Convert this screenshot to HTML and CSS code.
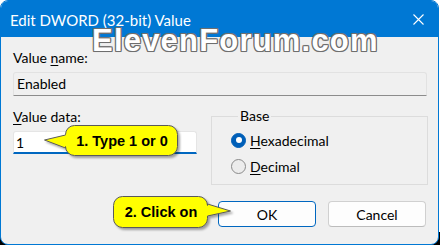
FILE: index.html
```html
<!DOCTYPE html>
<html>
<head>
<meta charset="utf-8">
<link rel="stylesheet" href="styles.css">
</head>
<body>
<div class="desk">
  <div class="window">
    <div class="titlebar">
      <span class="title">Edit DWORD (32-bit) Value</span>
      <svg class="close" width="11" height="11" viewBox="0 0 11 11"><path d="M0.5 0.5 L10.5 10.5 M10.5 0.5 L0.5 10.5" stroke="#fff" stroke-width="1.1" fill="none"/></svg>
    </div>
    <div class="content">
      <div class="label">Value <u>n</u>ame:</div>
      <div class="field readonly">Enabled</div>
      <div class="row">
        <div class="data-col">
          <div class="label"><u>V</u>alue data:</div>
          <div class="field edit">1</div>
        </div>
        <fieldset class="base">
          <legend>Base</legend>
          <div class="radio"><span class="dot on"></span><span><u>H</u>exadecimal</span></div>
          <div class="radio"><span class="dot"></span><span><u>D</u>ecimal</span></div>
        </fieldset>
      </div>
      <div class="buttons">
        <button class="btn default">OK</button>
        <button class="btn">Cancel</button>
      </div>
    </div>
    <div class="watermark">ElevenForum.com</div>
    <div class="callout c1">
      <svg class="bubble" width="140" height="40" viewBox="0 0 140 40">
        <defs><filter id="sh1" x="-10%" y="-20%" width="130%" height="160%"><feDropShadow dx="2" dy="2" stdDeviation="1.2" flood-color="#000" flood-opacity="0.35"/></filter></defs>
        <path filter="url(#sh1)" d="M31.5,2.5 H125.5 A9,9 0 0 1 134.5,11.5 V23.5 A9,9 0 0 1 125.5,32.5 H31.5 A9,9 0 0 1 22.5,23.5 V25 L1.5,17 L22.5,12 V11.5 A9,9 0 0 1 31.5,2.5 Z" fill="#ffff00" stroke="#5a5a5a" stroke-width="1"/>
      </svg>
      <span class="ctext t1">1. Type 1 or 0</span>
    </div>
    <div class="callout c2">
      <svg class="bubble" width="126" height="40" viewBox="0 0 126 40">
        <defs><filter id="sh2" x="-10%" y="-20%" width="130%" height="160%"><feDropShadow dx="2" dy="2" stdDeviation="1.2" flood-color="#000" flood-opacity="0.35"/></filter></defs>
        <path filter="url(#sh2)" d="M11.5,2.5 H87.5 A9,9 0 0 1 96.5,11.5 V10 L119.5,17 L96.5,22 V24.5 A9,9 0 0 1 87.5,33.5 H11.5 A9,9 0 0 1 2.5,24.5 V11.5 A9,9 0 0 1 11.5,2.5 Z" fill="#ffff00" stroke="#5a5a5a" stroke-width="1"/>
      </svg>
      <span class="ctext t2">2. Click on</span>
    </div>
  </div>
</div>
</body>
</html>
```
FILE: styles.css
```css
html, body { margin: 0; padding: 0; }
body { background: #fff; }
.desk {
  width: 440px;
  height: 245px;
  background: linear-gradient(#fff 232px, #000 232px);
}
.window {
  position: relative;
  box-sizing: border-box;
  width: 439px;
  height: 245px;
  border: 1px solid #0078d4;
  border-radius: 8px;
  overflow: hidden;
  background: #f0f0f0;
  display: flex;
  flex-direction: column;
  font-family: Lato, "Noto Sans", sans-serif;
  color: #000;
}
.titlebar {
  height: 36px;
  background: #0078d4;
  display: flex;
  align-items: center;
  padding: 0 0 0 9px;
  flex: none;
}
.title {
  color: #fff;
  font-size: 15px;
  line-height: 18px;
  margin-top: 1px;
  flex: 1;
}
.close { margin-right: 14px; margin-top: 1px; }
.content {
  padding: 0 11px 0 12px;
  display: flex;
  flex-direction: column;
}
.label {
  font-size: 14px;
  line-height: 16px;
  height: 16px;
}
.content > .label:first-child { margin-top: 13px; }
u { text-underline-offset: 2px; text-decoration-thickness: 1px; }
.field {
  box-sizing: border-box;
  height: 24px;
  margin-top: 6px;
  font-size: 14px;
  line-height: 21px;
  padding-left: 3px;
}
.readonly {
  background: #f0f0f0;
  border: 1px solid #e2e2e2;
  border-bottom: 1px solid #8c8c8c;
  border-radius: 3px 3px 0 0;
}
.edit {
  height: 23px;
  background: #fff;
  border: 1px solid #e5e5e5;
  border-bottom: 2px solid #0067c0;
  border-radius: 3px 3px 0 0;
  padding-left: 2px;
}
.row {
  display: flex;
  align-items: flex-start;
  margin-top: 12px;
}
.data-col {
  width: 184px;
  padding-top: 1px;
  margin-right: 14px;
  flex: none;
}
.base {
  flex: 1;
  margin: 0 -1px 0 0;
  border: 1px solid #dcdcdc;
  padding: 7px 0 9px 19px;
  min-width: 0;
}
.base legend {
  font-size: 14px;
  line-height: 16px;
  padding: 0 2px;
  margin-left: 7px;
}
.radio {
  display: flex;
  align-items: center;
  height: 18px;
  font-size: 14px;
  gap: 4px;
}
.radio + .radio { margin-top: 8px; }
.dot {
  box-sizing: border-box;
  width: 15px;
  height: 15px;
  border-radius: 50%;
  border: 1px solid #8a8a8a;
  background: #ececec;
  display: flex;
  align-items: center;
  justify-content: center;
}
.dot.on {
  background: #005fb8;
  border-color: #005fb8;
}
.dot.on::after {
  content: "";
  width: 6px;
  height: 6px;
  border-radius: 50%;
  background: #fff;
}
.buttons {
  display: flex;
  justify-content: flex-end;
  gap: 12px;
  margin-top: 16px;
  margin-right: 1px;
}
.btn {
  box-sizing: border-box;
  width: 98px;
  height: 26px;
  background: #fdfdfd;
  border: 1px solid #d0d0d0;
  border-bottom-color: #bcbcbc;
  border-radius: 4px;
  font-family: Lato, "Noto Sans", sans-serif;
  font-size: 14px;
  color: #000;
  padding: 0;
}
.btn.default {
  border: 1px solid #0067c0;
}
.watermark {
  position: absolute;
  left: 91px;
  top: 29px;
  font-family: "Liberation Sans", Arial, sans-serif;
  font-weight: bold;
  font-size: 31px;
  line-height: 22px;
  color: #fff;
  letter-spacing: 1.2px;
  text-shadow: 1px 0 0 #6e6e6e, -1px 0 0 #6e6e6e, 0 1px 0 #6e6e6e, 0 -1px 0 #6e6e6e,
    1px 1px 0 #6e6e6e, -1px -1px 0 #6e6e6e, 1px -1px 0 #6e6e6e, -1px 1px 0 #6e6e6e,
    0 0 2px #999;
}
.callout {
  position: absolute;
  display: flex;
  align-items: center;
  justify-content: center;
}
.bubble { position: absolute; left: 0; top: 0; }
.ctext {
  position: relative;
  font-family: "Liberation Sans", Arial, sans-serif;
  font-weight: bold;
  font-size: 14.5px;
  color: #000;
}
.c1 { left: 42px; top: 122px; width: 140px; height: 40px; }
.t1 { margin-left: 18px; margin-top: -5px; }
.c2 { left: 110px; top: 193px; width: 126px; height: 40px; }
.t2 { margin-right: 26px; margin-top: -4px; }
```
